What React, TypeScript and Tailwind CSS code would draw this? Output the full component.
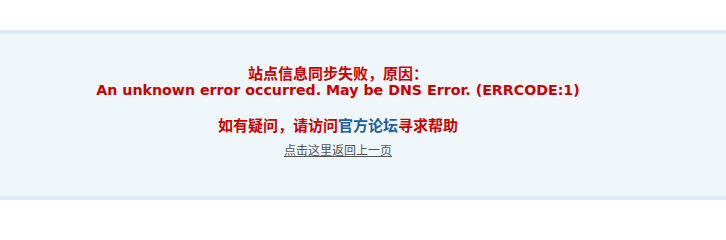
const cjk = "font-['SimSun','Noto_Sans_CJK_SC',sans-serif]";

export default function App() {
  return (
    <div className="w-[726px] h-[222px] bg-white font-['DejaVu_Sans','Noto_Sans_CJK_SC',sans-serif]">
      <div className="mt-[30px] h-[170px] border-y-4 border-[#dcebf7] bg-[#f0f7fb] pt-[31px] pr-[50px] text-center">
        <p className="text-[14px] leading-[16px] font-bold text-[#cc0000]">
          <span className={`text-[15px] ${cjk}`}>站点信息同步失败，原因：</span>
          <br />
          <span className="text-[14.2px]">An unknown error occurred. May be DNS Error. (ERRCODE:1)</span>
        </p>
        <p className={`mt-[18px] text-[15px] leading-[17px] font-bold text-[#cc0000] ${cjk}`}>
          如有疑问，请访问<a href="#" className="text-[#1f5d9d]">官方论坛</a>寻求帮助
        </p>
        <p className={`mt-[10px] text-[12px] leading-[14px] ${cjk}`}>
          <a href="#" className="text-[#555555] underline">点击这里返回上一页</a>
        </p>
      </div>
    </div>
  );
}
